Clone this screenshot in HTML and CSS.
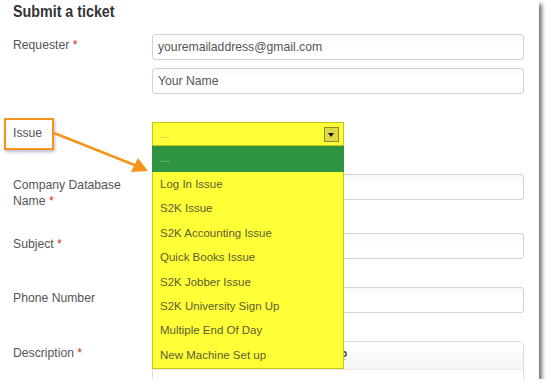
FILE: index.html
```
<!DOCTYPE html>
<html lang="en">
<head>
    <meta charset="UTF-8">
    <title>Submit a ticket</title>
    <link rel="stylesheet" href="styles.css">
</head>
<body>
    <div class="panel">
        <h1 class="title">Submit a ticket</h1>

        <div class="row">
            <label class="label">Requester <span class="req">*</span></label>
            <div class="controls stack">
                <div class="input">youremailaddress@gmail.com</div>
                <div class="input">Your Name</div>
            </div>
        </div>

        <div class="row">
            <label class="label">Issue</label>
            <div class="controls">
                <div class="select">
                    <span class="select-value">...</span>
                    <span class="select-arrow"></span>
                    <ul class="options">
                        <li class="option selected">...</li>
                        <li class="option">Log In Issue</li>
                        <li class="option">S2K Issue</li>
                        <li class="option">S2K Accounting Issue</li>
                        <li class="option">Quick Books Issue</li>
                        <li class="option">S2K Jobber Issue</li>
                        <li class="option">S2K University Sign Up</li>
                        <li class="option">Multiple End Of Day</li>
                        <li class="option">New Machine Set up</li>
                    </ul>
                </div>
            </div>
        </div>

        <div class="row row-tall">
            <label class="label">Company Database<br>Name <span class="req">*</span></label>
            <div class="controls"><div class="input"></div></div>
        </div>

        <div class="row">
            <label class="label">Subject <span class="req">*</span></label>
            <div class="controls"><div class="input"></div></div>
        </div>

        <div class="row">
            <label class="label">Phone Number</label>
            <div class="controls"><div class="input"></div></div>
        </div>

        <div class="row">
            <label class="label label-low">Description <span class="req">*</span></label>
            <div class="controls">
                <div class="editor">
                    <div class="toolbar">
                        <svg class="tool-icon" width="18" height="14" viewBox="0 0 18 14">
                            <path d="M2 6h8" stroke="#444" stroke-width="1.4" fill="none"/>
                            <circle cx="13" cy="6" r="2.2" stroke="#444" stroke-width="1.4" fill="none"/>
                            <circle cx="14" cy="11.5" r="0.6" fill="#888"/>
                        </svg>
                    </div>
                </div>
            </div>
        </div>

        <div class="callout"></div>
        <svg class="pointer" width="110" height="50" viewBox="0 0 110 50">
            <line x1="1" y1="3" x2="84" y2="36" stroke="#f4941c" stroke-width="2.6"/>
            <polygon points="95,41 78,42 85,28" fill="#f4941c"/>
        </svg>
    </div>
</body>
</html>
```
FILE: styles.css
```
body {
    margin: 0;
    background: #fff;
    font-family: "Liberation Sans", Arial, sans-serif;
}
.panel {
    position: relative;
    width: 539px;
    height: 379px;
    box-sizing: border-box;
    padding: 0 15px 0 13px;
    background: #fff;
    overflow: hidden;
    box-shadow: 3px 4px 4px rgba(0, 0, 0, 0.55);
}
/* the original heading face is a condensed bold */
.title {
    margin: 0;
    height: 34px;
    line-height: 23px;
    font-family: "Liberation Sans", Arial, sans-serif;
    font-size: 17px;
    font-weight: bold;
    color: #333;
    transform: scaleX(0.84);
    transform-origin: left top;
}
.row {
    display: grid;
    grid-template-columns: 139px 1fr;
    margin-bottom: 28px;
}
.row-tall {
    margin-bottom: 24px;
}
.label {
    padding-top: 3px;
    font-size: 12.2px;
    line-height: 16px;
    color: #555;
}
.label-low {
    padding-top: 4px;
}
.req {
    color: #d2322d;
}
.controls {
    position: relative;
}
.stack {
    display: flex;
    flex-direction: column;
    gap: 8px;
}
.input {
    height: 26px;
    box-sizing: border-box;
    padding: 0 5px;
    border: 1px solid #d2d2d2;
    border-radius: 3px;
    background: linear-gradient(#f9f9f9, #fff 40%);
    font-size: 12.2px;
    line-height: 24px;
    color: #555;
}
.select {
    position: relative;
    width: 192px;
    height: 24px;
    box-sizing: border-box;
    border: 1px solid #c7c41c;
    background: #ffff38;
}
.select-value {
    display: block;
    padding-left: 7px;
    line-height: 22px;
    font-size: 11px;
    color: #a9a860;
}
.select-arrow {
    position: absolute;
    right: 4px;
    top: 4px;
    width: 13px;
    height: 13px;
    border: 1px solid #8c8a2a;
    background: #dcda48;
}
.select-arrow::after {
    content: "";
    position: absolute;
    left: 3px;
    top: 5px;
    border-left: 3.5px solid transparent;
    border-right: 3.5px solid transparent;
    border-top: 4px solid #111;
}
.options {
    position: absolute;
    left: -1px;
    top: 23px;
    width: 192px;
    box-sizing: border-box;
    margin: 0;
    padding: 0 0 1px;
    list-style: none;
    border: 1px solid #c7c41c;
    border-top: none;
    background: #ffff38;
    z-index: 2;
}
.option {
    padding-left: 7px;
    height: 24.4px;
    line-height: 24.4px;
    font-size: 11.5px;
    color: #5c5c30;
}
.option.selected {
    height: 26px;
    line-height: 24px;
    margin: 0 -1px;
    padding-left: 8px;
    background: #2f9442;
    color: #b4d8a8;
}
.editor {
    height: 100px;
    border: 1px solid #dcdcdc;
    border-radius: 4px 4px 0 0;
}
.toolbar {
    height: 28px;
    box-sizing: border-box;
    padding: 6px 0 0 178px;
    border-bottom: 1px solid #ececec;
    background: linear-gradient(#fff, #f4f4f4);
}
.callout {
    position: absolute;
    left: 4px;
    top: 118px;
    width: 46px;
    height: 28px;
    border: 2px solid #f4941c;
    box-shadow: 1px 2px 3px rgba(60, 60, 120, 0.35);
}
.pointer {
    position: absolute;
    left: 53px;
    top: 130px;
    z-index: 3;
}
```
